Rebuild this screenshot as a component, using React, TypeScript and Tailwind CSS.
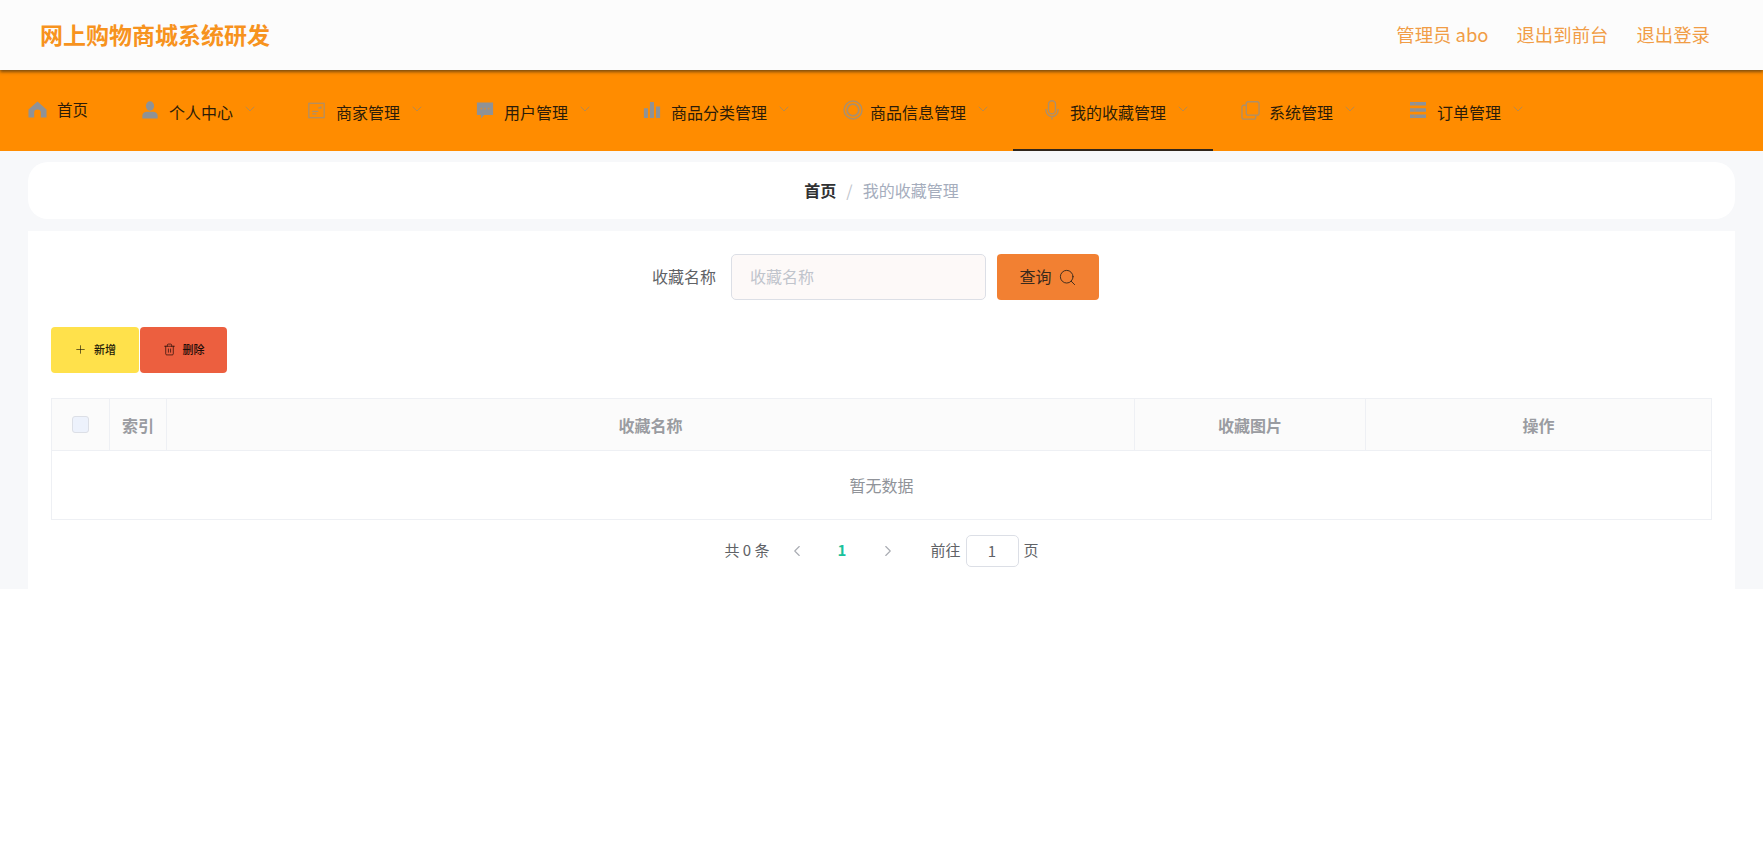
import { ChevronDown, ChevronLeft, ChevronRight, Plus, Search, Trash2 } from "lucide-react"
import type { ReactNode } from "react"

const iconGrey = "#8f9296"
const lineGrey = "#ab8f6c"

function HomeIcon() {
  return (
    <svg viewBox="0 0 20 20" className="w-[19px] h-[19px]" fill={iconGrey}>
      <path d="M10 1.5 19.5 10v8.5h-6v-5a3.5 3.5 0 0 0-7 0v5h-6V10z" />
    </svg>
  )
}

function PersonIcon() {
  return (
    <svg viewBox="0 0 20 20" className="w-[18px] h-[20px]" fill={iconGrey}>
      <ellipse cx="10" cy="5.5" rx="4.6" ry="5.2" />
      <path d="M1.5 19.5v-3.2c0-2.6 2.6-4.3 5-4.3h7c2.4 0 5 1.7 5 4.3v3.2z" />
    </svg>
  )
}

function ShopIcon() {
  return (
    <svg viewBox="0 0 20 20" className="w-[19px] h-[17px]" fill="none" stroke={lineGrey} strokeWidth="1.4">
      <rect x="1" y="1.5" width="18" height="17" />
      <path d="M5 11h7M5 14h5M12 7h4M15 5v3" />
    </svg>
  )
}

function ChatIcon() {
  return (
    <svg viewBox="0 0 20 20" className="w-[18px] h-[19px]" fill={iconGrey}>
      <path d="M1 1h18v14H9l-3.5 4v-4H1z" />
      <path d="M5 7h2v2H5zm4 0h2v2H9zm4 0h2v2h-2z" fill="#ff8c00" opacity="0.5" />
    </svg>
  )
}

function BarsIcon() {
  return (
    <svg viewBox="0 0 20 20" className="w-[18px] h-[18px]" fill={iconGrey}>
      <path d="M1 8h4.5v11H1zM7.7 1h4.5v18H7.7zM14.5 6H19v13h-4.5z" />
    </svg>
  )
}

function RingIcon() {
  return (
    <svg viewBox="0 0 20 20" className="w-[20px] h-[20px]" fill="none" stroke={lineGrey} strokeWidth="1.4">
      <circle cx="10" cy="10" r="9" />
      <circle cx="10" cy="10" r="5.8" strokeWidth="1.8" />
    </svg>
  )
}

function MicIcon() {
  return (
    <svg viewBox="0 0 14 20" className="w-[14px] h-[20px]" fill="none" stroke={lineGrey} strokeWidth="1.4">
      <rect x="3.5" y="0.8" width="7" height="13" rx="3.5" />
      <path d="M1 9v1.5a6 6 0 0 0 12 0V9M7 16.5v3" />
    </svg>
  )
}

function CopyIcon() {
  return (
    <svg viewBox="0 0 20 20" className="w-[19px] h-[19px]" fill="none" stroke={lineGrey} strokeWidth="1.4">
      <rect x="5.5" y="0.8" width="13.5" height="14" rx="2" />
      <path d="M5.5 4.5H3A2 2 0 0 0 1 6.5V17a2 2 0 0 0 2 2h10.5a2 2 0 0 0 2-2v-2.2" />
    </svg>
  )
}

function ListIcon() {
  return (
    <svg viewBox="0 0 20 18" className="w-[18px] h-[16px]" fill={iconGrey}>
      <path d="M1 0h18v4H1zM1 7h18v4H1zM1 14h18v4H1z" />
      <path d="M6 1.5h1v1H6zM6 8.5h1v1H6zM6 15.5h1v1H6z" fill="#ff8c00" />
    </svg>
  )
}

type NavItem = { label: string; icon: ReactNode; width: string; pad: string; gap: string; active?: boolean }

const navItems: NavItem[] = [
  { label: "个人中心", icon: <PersonIcon />, width: "w-[166px]", pad: "pl-8", gap: "gap-[10px]" },
  { label: "商家管理", icon: <ShopIcon />, width: "w-[169px]", pad: "pl-8", gap: "gap-[10px]" },
  { label: "用户管理", icon: <ChatIcon />, width: "w-[167px]", pad: "pl-8", gap: "gap-[10px]" },
  { label: "商品分类管理", icon: <BarsIcon />, width: "w-[200px]", pad: "pl-8", gap: "gap-[10px]" },
  { label: "商品信息管理", icon: <RingIcon />, width: "w-[202px]", pad: "pl-8", gap: "gap-[7px]" },
  { label: "我的收藏管理", icon: <MicIcon />, width: "w-[200px]", pad: "pl-8", gap: "gap-[11px]", active: true },
  { label: "系统管理", icon: <CopyIcon />, width: "w-[164px]", pad: "pl-[28px]", gap: "gap-[9px]" },
  { label: "订单管理", icon: <ListIcon />, width: "w-[160px]", pad: "pl-8", gap: "gap-[10px]" },
]

export default function App() {
  return (
    <div className="bg-white min-h-screen font-['Noto_Sans_CJK_SC','Noto_Sans',sans-serif] text-[#303133]">
      {/* top bar */}
      <header className="relative z-10 h-[70px] flex items-center justify-between pl-10 pr-[53px] bg-[#fcfcfc] shadow-[0_2px_3px_rgba(70,50,20,0.7)]">
        <h1 className="pb-[2px] text-[23px] leading-none font-bold text-[#f7931e]">网上购物商城系统研发</h1>
        <div className="flex items-center gap-7 text-[18.4px] text-[#f19d46]">
          <span>管理员 abo</span>
          <span>退出到前台</span>
          <span>退出登录</span>
        </div>
      </header>

      {/* nav */}
      <nav className="h-[81px] flex bg-[#ff8c00] text-[#2c1c08] text-[16px]">
        <div className="w-[109px] h-full flex items-center gap-[10px] pl-[28px] pb-[2px]">
          <HomeIcon />
          <span className="text-[15.5px]">首页</span>
        </div>
        {navItems.map((item) => (
          <div
            key={item.label}
            className={`${item.width} ${item.pad} h-full flex items-center pt-1 border-b-2 ${item.active ? "border-[#30261c]" : "border-transparent"}`}
          >
            <div className={`flex items-center ${item.gap}`}>
              <span className="-mt-[3px] flex">{item.icon}</span>
              <span>{item.label}</span>
            </div>
            <ChevronDown className="ml-[9px] -mt-[5px] w-[16px] h-[16px] text-[#b18a55]" strokeWidth={1.4} />
          </div>
        ))}
      </nav>

      <main className="bg-[#f7f8fa] h-[438px] pt-[11px] px-7 flex flex-col gap-3">
        <div className="h-[57px] pb-[2px] flex items-center justify-center bg-white rounded-[20px] text-[16px]">
          <span className="font-bold text-[#303133]">首页</span>
          <span className="mx-[10px] text-[#c0c4cc]">/</span>
          <span className="text-[#a5adbd]">我的收藏管理</span>
        </div>

        <section className="flex-1 bg-white px-[23px] pt-[23px]">
          {/* search */}
          <div className="flex items-center justify-center pr-[12px] h-[46px]">
            <span className="pb-[2px] text-[16px] text-[#606266] mr-[15px]">收藏名称</span>
            <input
              className="w-[255px] h-[46px] px-[18px] pb-[2px] text-[16px] bg-[#fdf9f8] border border-[#dcdfe6] rounded-[5px] outline-none placeholder:text-[#c0c4cc]"
              placeholder="收藏名称"
              readOnly
            />
            <button className="ml-[11px] w-[102px] h-[46px] pb-[2px] flex items-center justify-center gap-[6px] bg-[#f28032] rounded-[4px] text-[16px] text-[#3a2a1c]">
              查询
              <Search className="mt-[2px] w-[19px] h-[19px]" strokeWidth={1.2} />
            </button>
          </div>

          {/* actions */}
          <div className="flex gap-[1px] mt-[27px]">
            <button className="w-[88px] h-[46px] pb-[1px] flex items-center justify-center gap-[7px] bg-[#ffe14b] rounded-[4px] text-[11px] font-medium text-[#1f1a08]">
              <Plus className="w-[13px] h-[13px]" strokeWidth={1.2} />
              新增
            </button>
            <button className="w-[87px] h-[46px] pb-[1px] flex items-center justify-center gap-[7px] bg-[#ec5f3f] rounded-[4px] text-[11px] font-medium text-[#1f0c08]">
              <Trash2 className="w-[13px] h-[13px]" strokeWidth={1.3} />
              删除
            </button>
          </div>

          {/* table */}
          <div className="mt-[25px] border border-[#eef0f4] text-[16px]">
            <div className="flex h-[52px] bg-[#fbfbfb] border-b border-[#eef0f4] font-bold text-[#9a9ca1]">
              <div className="w-[58px] flex items-center justify-center border-r border-[#eef0f4]">
                <span className="w-[17px] h-[17px] bg-[#edf2fc] border border-[#dcdfe6] rounded-[3px]" />
              </div>
              <div className="w-[57px] flex items-center justify-center border-r border-[#eef0f4]">索引</div>
              <div className="flex-1 flex items-center justify-center border-r border-[#eef0f4]">收藏名称</div>
              <div className="w-[231px] flex items-center justify-center border-r border-[#eef0f4]">收藏图片</div>
              <div className="w-[345px] flex items-center justify-center">操作</div>
            </div>
            <div className="h-[68px] flex items-center justify-center text-[#909399]">暂无数据</div>
          </div>

          {/* pagination */}
          <div className="mt-[15px] flex items-center justify-center h-[32px] text-[15px] text-[#606266]">
            <span className="pb-[2px]">共 0 条</span>
            <ChevronLeft className="ml-[18px] w-[18px] h-[18px] text-[#a9acb2]" strokeWidth={1.5} />
            <span className="mx-[29px] w-[15px] pb-[2px] text-center font-bold text-[#19c29b]">1</span>
            <ChevronRight className="w-[18px] h-[18px] text-[#a9acb2]" strokeWidth={1.5} />
            <span className="ml-[34px] pb-[2px]">前往</span>
            <span className="mx-[5px] w-[53px] h-[32px] flex items-center justify-center border border-[#dcdfe6] rounded-[5px]">1</span>
            <span className="pb-[2px]">页</span>
          </div>
        </section>
      </main>
    </div>
  )
}
